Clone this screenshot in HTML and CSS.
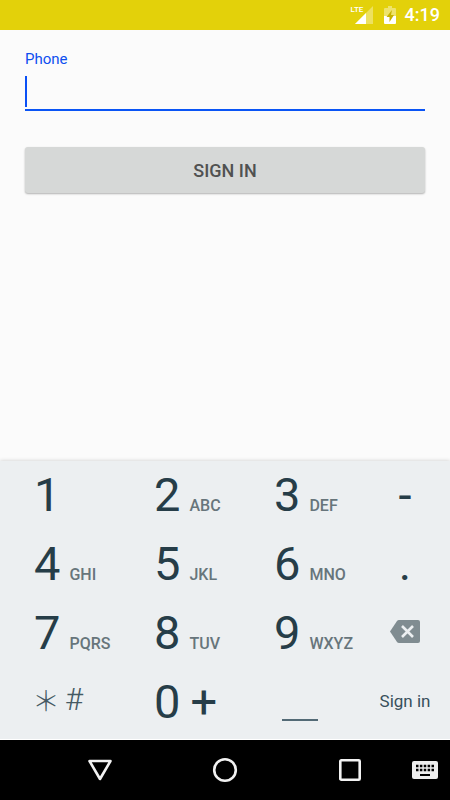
FILE: index.html
```html
<!DOCTYPE html>
<html lang="en">
<head>
<meta charset="utf-8">
<meta name="viewport" content="width=device-width, initial-scale=1">
<title>Sign in</title>
<link rel="stylesheet" href="styles.css">
</head>
<body>
<header class="status">
  <div class="signal">
    <span class="network">LTE</span>
    <svg width="24" height="20" viewBox="0 0 24 20" aria-hidden="true"><path d="M23 1V19H5z" fill="#fff" fill-opacity=".35"/><path d="M16 8V19H5z" fill="#fff"/></svg>
  </div>
  <svg class="battery" width="12" height="18" viewBox="0 0 12 18" aria-hidden="true"><path d="M4 0h4v2h3q1 0 1 1v7H0V3q0-1 1-1h3z" fill="#fff" fill-opacity=".4"/><path d="M0 10h12v7q0 1-1 1H1q-1 0-1-1z" fill="#fff"/><path d="M8 4L2.500 11h3v5l4.500-7H7z" fill="#c7b300"/></svg>
  <time>4:19</time>
</header>
<main>
  <form class="login">
    <label for="phone">Phone</label>
    <div class="field"><input id="phone" type="tel"><span class="caret"></span></div>
    <button class="submit" type="button">SIGN IN</button>
  </form>
</main>
<section class="keypad" aria-label="Keypad">
  <button type="button">1</button>
  <button type="button">2<small>ABC</small></button>
  <button type="button">3<small>DEF</small></button>
  <button type="button" class="side">-</button>
  <button type="button">4<small>GHI</small></button>
  <button type="button">5<small>JKL</small></button>
  <button type="button">6<small>MNO</small></button>
  <button type="button" class="side">.</button>
  <button type="button">7<small>PQRS</small></button>
  <button type="button">8<small>TUV</small></button>
  <button type="button">9<small>WXYZ</small></button>
  <button type="button" class="side delete" aria-label="Delete"><svg width="30" height="23" viewBox="0 0 30 23"><path d="M9 0H28q2 0 2 2V21q0 2-2 2H9q-1.300 0-2-1L0 11.500 7 1q.7-1 2-1z" fill="#808c91"/><path d="M12 6l11 11M23 6L12 17" stroke="#eceff1" stroke-width="2.600"/></svg></button>
  <button type="button" class="symbols"><span class="star">＊</span><span>#</span></button>
  <button type="button">0<span class="plus">+</span></button>
  <button type="button" class="space" aria-label="Space"><span class="bar"></span></button>
  <button type="button" class="side action">Sign in</button>
</section>
<nav class="navbar">
  <button type="button" aria-label="Back"><svg width="26" height="24" viewBox="0 0 26 24"><path d="M2.500 3h21L13 21z"/></svg></button>
  <button type="button" aria-label="Home"><svg width="26" height="26" viewBox="0 0 26 26"><circle cx="13" cy="13" r="10.800"/></svg></button>
  <button type="button" aria-label="Recent apps"><svg width="22" height="22" viewBox="0 0 22 22"><rect x="1.300" y="1.300" width="19.400" height="19.400" rx="1"/></svg></button>
  <button type="button" class="ime" aria-label="Switch keyboard"><svg width="26" height="18" viewBox="0 0 26 18"><rect width="26" height="18" rx="2" fill="#eee" stroke="none"/><path d="M4 5h18M4 9h18" stroke="#000" stroke-width="2.400" stroke-dasharray="2.500 1.375"/><path d="M8 14h10" stroke="#000" stroke-width="2"/></svg></button>
</nav>
</body>
</html>
```
FILE: styles.css
```css
* { box-sizing: border-box; }
body {
  margin: 0;
  min-height: 100vh;
  display: flex;
  flex-direction: column;
  background: #fbfbfb;
  font-family: Roboto, sans-serif;
}
button {
  margin: 0;
  padding: 0;
  border: 0;
  background: none;
  color: inherit;
  font: inherit;
}
svg { display: block; flex: none; }

.status {
  height: 30px;
  padding: 0 10px;
  display: flex;
  align-items: center;
  justify-content: flex-end;
  background: #e3d10a;
  color: #fff;
}
.signal { position: relative; }
.network {
  position: absolute;
  left: 1px;
  top: 0;
  font: 500 8px/10px Roboto, sans-serif;
}
.battery { margin: 0 9px 0 10px; }
.status time { font-size: 18px; font-weight: 500; line-height: 32px; }

main { flex: 1; }
.login {
  padding: 20px 25px;
  display: flex;
  flex-direction: column;
}
.login label { font-size: 15px; line-height: 18px; color: #0d4ff0; }
.field { position: relative; margin-bottom: 36px; }
.field input {
  display: block;
  width: 100%;
  height: 43px;
  padding: 0 0 4px;
  border: 0;
  border-bottom: 2px solid #0a54f5;
  outline: 0;
  background: none;
  font: 20px Roboto, sans-serif;
}
.caret {
  position: absolute;
  left: 0;
  top: 8px;
  width: 2px;
  height: 31px;
  background: #0a50f5;
}
.submit {
  height: 46px;
  border-radius: 3px;
  background: #d6d8d7;
  box-shadow: 0 1px 2px rgba(0, 0, 0, .3);
  color: #505151;
  font-size: 18px;
  font-weight: 500;
  line-height: 48px;
}

.keypad {
  display: grid;
  grid-template-columns: 4fr 4fr 4fr 3fr;
  grid-auto-rows: 69px;
  padding-bottom: 2px;
  background: #eceff1;
  border-bottom: 1px solid #fff;
  box-shadow: 0 0 4px rgba(0, 0, 0, .2);
  color: #263d48;
}
.keypad button {
  display: flex;
  align-items: baseline;
  padding: 6px 0 0 34px;
  font-size: 47px;
  line-height: 56px;
}
.keypad small {
  margin-left: 9px;
  color: #67757b;
  font-size: 16px;
  font-weight: 500;
}
.keypad .side { padding-left: 0; justify-content: center; }
.keypad .delete { align-items: center; padding: 0 0 4px; }
.plus { margin-left: 10px; }
.keypad .symbols {
  align-items: center;
  gap: 5px;
  padding: 0 0 6px 32px;
  font-size: 31px;
  font-weight: 300;
  color: #455a64;
}
.star { font-family: "Noto Sans CJK JP", sans-serif; font-size: 28px; }
.keypad .space { align-items: flex-end; padding: 0 0 16px 42px; }
.bar { width: 36px; height: 2px; background: #536a76; }
.keypad .action { align-items: center; padding: 0 0 4px; font-size: 17px; color: #37505c; }

.navbar {
  height: 60px;
  position: relative;
  display: grid;
  grid-template-columns: repeat(3, 125px);
  justify-content: center;
  background: #000;
}
.navbar button { display: flex; align-items: center; justify-content: center; }
.navbar svg {
  fill: none;
  stroke: #f2f2f2;
  stroke-width: 2.6px;
  stroke-linejoin: round;
}
.navbar .ime { position: absolute; right: 12px; top: 0; height: 60px; }
```
